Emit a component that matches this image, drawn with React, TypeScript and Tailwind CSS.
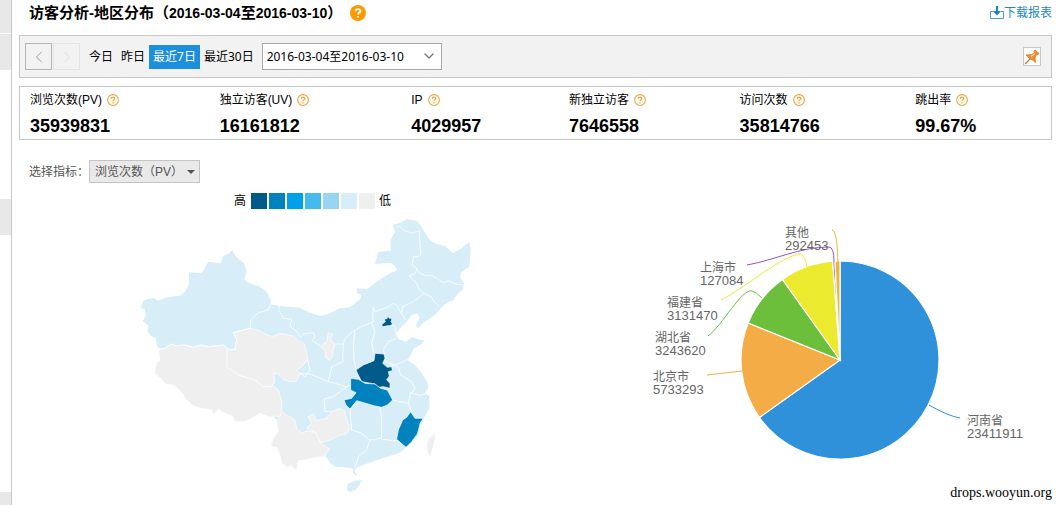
import type { ReactNode } from 'react';
import { clsx } from 'clsx';
import { ChevronDown, ChevronLeft, ChevronRight } from 'lucide-react';

const NO_DATA = '#efefef';
const LOW = '#d7edf8';

const stats = [
  { label: '浏览次数(PV)', value: '35939831' },
  { label: '独立访客(UV)', value: '16161812' },
  { label: 'IP', value: '4029957' },
  { label: '新独立访客', value: '7646558' },
  { label: '访问次数', value: '35814766' },
  { label: '跳出率', value: '99.67%' },
];

const ranges = ['今日', '昨日', '最近7日', '最近30日'];

const legend = ['bg-[#005b8a]', 'bg-[#0082bf]', 'bg-[#00a0ea]', 'bg-[#43bbef]', 'bg-[#99d5f3]', 'bg-[#d7edf8]', 'bg-[#efefef]'];

// Map outlines, drawn at three units per pixel
const mainland =
  '307,121 318,140 330,150 342,160 350,185 342,208 355,218 385,228 410,245 422,270 422,283 448,288 510,293 538,308 570,318 595,312 630,295 660,292 690,268 695,255 680,250 682,235 710,238 755,205 780,190 802,180 795,168 782,158 760,160 735,162 745,125 782,122 782,90 795,65 788,45 810,38 830,28 860,32 875,50 895,85 910,98 945,108 968,130 995,115 1018,95 1022,120 1018,170 995,185 990,200 1002,220 998,240 985,248 970,270 950,278 935,292 915,315 880,338 865,355 858,345 868,325 862,310 845,315 830,335 810,355 797,370 805,388 828,395 845,382 865,388 884,392 870,405 852,415 840,440 832,450 855,465 875,490 892,515 895,535 885,548 898,560 898,595 888,612 880,628 870,650 865,675 845,698 828,712 810,728 772,740 735,752 700,765 685,770 672,782 682,797 670,792 668,775 640,772 615,770 600,758 588,740 570,740 540,745 525,750 445,665 440,630 290,470 90,418 80,405 78,385 62,378 52,362 56,348 38,332 48,318 45,298 32,294 40,272 55,266 72,264 85,272 110,262 150,257 165,245 177,222 177,187 215,190 235,155 272,160 280,137 295,132';

const regions = [
  {
    name: '西藏',
    fill: NO_DATA,
    points:
      '85,418 105,415 122,402 140,408 165,405 190,412 215,405 235,410 280,405 292,420 290,470 325,495 375,510 400,530 430,528 445,540 455,575 455,605 450,620 435,618 420,622 390,610 345,635 315,635 308,620 290,612 265,598 250,615 245,600 215,595 190,588 165,565 160,552 130,525 105,522 95,508 73,488 80,460 90,450',
  },
  {
    name: '青海',
    fill: NO_DATA,
    points:
      '292,420 315,418 320,388 310,368 330,362 360,355 390,362 405,372 428,380 450,370 490,378 505,392 522,400 530,430 533,450 515,470 500,480 510,492 498,515 480,515 460,508 445,492 432,490 434,515 425,530 400,530 375,510 325,495 290,470',
  },
  {
    name: '宁夏',
    fill: NO_DATA,
    points: '595,368 607,372 602,388 615,405 608,425 610,435 600,452 585,440 588,425 572,410 590,395',
  },
  {
    name: '云南',
    fill: NO_DATA,
    points:
      '455,605 470,615 495,630 500,655 515,670 530,663 557,668 568,690 572,700 590,712 600,718 588,730 586,740 570,740 540,745 525,750 505,752 500,782 485,768 470,772 455,760 450,735 440,712 422,708 430,685 445,665 440,630 450,620',
  },
  {
    name: '贵州',
    fill: NO_DATA,
    points:
      '535,620 550,612 560,632 590,625 605,605 630,595 645,605 650,630 660,655 650,670 620,680 600,690 572,698 557,668 530,655 545,640',
  },
  {
    name: '河南',
    fill: '#005b8a',
    points:
      '735,430 762,432 765,445 758,460 772,472 785,470 787,482 775,485 778,498 770,510 780,520 780,535 760,530 745,532 735,522 695,515 685,495 678,480 700,465 732,452',
  },
  {
    name: '湖北',
    fill: '#0082bf',
    points:
      '662,505 685,508 705,520 735,522 752,535 772,540 780,555 788,570 772,585 755,592 735,588 725,585 680,572 670,585 660,597 648,585 642,570 665,565 678,548 662,540',
  },
  {
    name: '福建',
    fill: '#0082bf',
    points: '842,605 855,625 880,625 870,640 868,650 862,672 845,695 828,712 812,698 800,688 805,660 818,630 830,622',
  },
  {
    name: '北京',
    fill: '#005b8a',
    points: '772,317 778,325 786,325 783,335 789,343 778,347 772,347 765,349 756,350 756,343 766,335 763,328 772,325',
  },
  { name: '台湾', fill: NO_DATA, points: '905,678 915,668 915,690 908,715 902,742 893,728 890,700 897,685' },
  { name: '海南', fill: LOW, points: '650,830 655,820 672,812 697,808 690,825 675,842 660,847 650,842' },
];

const borders = [
  // 新疆 / 甘肃 / 内蒙古
  '85,418 105,415 122,402 140,408 165,405 190,412 215,405 235,410 280,405 300,420 315,418 320,388 310,368 360,355 362,330 385,308 415,300 422,283',
  '448,288 446,300 460,325 485,328 480,350 498,362 512,382 520,372 550,368 555,380 547,392 572,408',
  // 东北
  '800,50 810,48 820,60 845,70 868,62 872,135 862,140 852,138 845,165 860,175 858,188 838,198 860,220 865,235 882,250 850,275 818,290 815,312 800,285 790,280 772,292 735,305 730,292 728,318 730,335 695,350 672,362 645,385 640,402 615,402',
  '860,175 870,190 890,198 905,195 925,208 940,218 955,212 975,222 1000,225',
  '882,250 905,262 915,278 928,290',
  '815,312 828,330',
  '785,342 795,350 797,370',
  // 华北
  '725,340 735,365 725,400 732,430',
  '675,362 670,400 672,450 678,480',
  '800,385 775,395 760,420 765,435',
  '640,402 638,455 605,470 595,515 650,530 662,525',
  '510,490 540,492 560,500 595,515',
  '533,450 540,480 525,500 510,490',
  // 长江流域
  '650,530 610,560 582,568 585,605 605,605',
  '678,575 660,600 665,660 695,670 720,690 755,685 755,625 750,592',
  '755,688 775,690 800,692 812,700',
  '788,570 810,575 835,580 845,605',
  '780,465 805,470 812,495 845,515 855,535 840,555 835,580',
  '762,452 795,465 815,458 840,445',
  '840,548 870,556 890,550',
  // 华南
  '720,690 710,720 685,740 675,775',
];

const PIE = { cx: 840, cy: 360, r: 99 };

const slices = [
  { name: '河南省', value: 23411911, color: '#2f91da', x: 967, y: 425, line: 'M929 405 Q948 416 960 418' },
  { name: '北京市', value: 5733293, color: '#f4ad46', x: 653, y: 381, line: 'M707 375 Q725 373 742 371' },
  { name: '湖北省', value: 3243620, color: '#6bbf3b', x: 655, y: 342, line: 'M708 336 C722 326 742 288 752 291 Q756 292 762 298' },
  { name: '福建省', value: 3131470, color: '#ecea2e', x: 667, y: 307, line: 'M721 300 C745 288 784 254 801 254 Q805 256 807 267' },
  { name: '上海市', value: 127084, color: '#9b50cc', x: 700, y: 272, line: 'M747 265 C775 260 800 247 829 247 Q834 247 834 262' },
  { name: '其他', value: 292453, color: '#edb72f', x: 785, y: 237, line: 'M832 230 Q837 230 838 262' },
];

function slicePath(start: number, end: number) {
  const { cx, cy, r } = PIE;
  const point = (t: number) => {
    const angle = t * 2 * Math.PI - Math.PI / 2;
    return `${cx + r * Math.cos(angle)} ${cy + r * Math.sin(angle)}`;
  };
  return `M${cx} ${cy}L${point(start)}A${r} ${r} 0 ${end - start > 0.5 ? 1 : 0} 1 ${point(end)}Z`;
}

function HelpIcon({ solid = false }: { solid?: boolean }) {
  const size = solid ? 16 : 12;
  return (
    <svg width={size} height={size} viewBox="0 0 16 16" fill="none" className="shrink-0">
      <circle cx="8" cy="8" r={solid ? 8 : 7.2} fill={solid ? '#f90' : '#fffaf0'} stroke={solid ? 'none' : '#e8a545'} strokeWidth="1.4" />
      <path
        d="M5.6 6.2C5.6 3.4 10.4 3.4 10.4 6.2C10.4 7.8 8 7.8 8 9.6M8 11V12.6"
        stroke={solid ? '#fff' : '#eda13a'}
        strokeWidth={solid ? 1.9 : 1.5}
      />
    </svg>
  );
}

function DownloadIcon() {
  return (
    <svg width="14" height="14" viewBox="0 0 14 14" fill="none">
      <path d="M3 5.5H0.5V12.5H13.5V5.5H11" stroke="#4d9fd0" />
      <path d="M6 0H8V5H11L7 9.5L3 5H6Z" fill="#1583c6" />
    </svg>
  );
}

function PinIcon() {
  return (
    <svg width="16" height="16" viewBox="0 0 16 16">
      <path d="M1 15L6 10" stroke="#c07a45" strokeWidth="1.3" />
      <path d="M11 1L15 4.5L13.5 6L12.5 5.8L11 9L11.5 13.5L8.5 11L5.5 9.5L2 6L7.5 5.5L10.5 3.5L10 2Z" fill="#f58a2c" stroke="#c9681f" strokeWidth=".6" />
      <path d="M11 4.5L7 7.5" stroke="#ffd3a0" strokeWidth="1.3" />
    </svg>
  );
}

function ChinaMap() {
  return (
    <svg width="350" height="295" viewBox="0 0 1050 885" className="shrink-0" strokeLinejoin="round">
      <polygon points={mainland} fill={LOW} />
      {regions.map((region) => (
        <polygon key={region.name} points={region.points} fill={region.fill} stroke="#fff" strokeWidth="2" />
      ))}
      {borders.map((points) => (
        <polyline key={points} points={points} fill="none" stroke="#fff" strokeWidth="3" strokeOpacity=".8" />
      ))}
    </svg>
  );
}

function RegionPie() {
  const total = slices.reduce((sum, slice) => sum + slice.value, 0);
  let offset = 0;

  return (
    <svg width="400" height="260" viewBox="640 215 400 260" className="shrink-0">
      {slices.map((slice) => {
        const start = offset / total;
        offset += slice.value;
        return (
          <path key={slice.name} d={slicePath(start, offset / total)} fill={slice.color} stroke="#fff" strokeWidth="1.2" />
        );
      })}
      {slices.map((slice) => (
        <g key={slice.name}>
          <path d={slice.line} fill="none" stroke={slice.color} />
          <text fill="#666">
            <tspan x={slice.x} y={slice.y}>{slice.name}</tspan>
            <tspan x={slice.x} y={slice.y + 13} className="text-[13px]">{slice.value}</tspan>
          </text>
        </g>
      ))}
    </svg>
  );
}

function StepButton({ label, disabled, children }: { label: string; disabled?: boolean; children: ReactNode }) {
  return (
    <button
      type="button"
      aria-label={label}
      disabled={disabled}
      className={clsx(
        'flex h-[27px] w-[27px] items-center justify-center border',
        disabled ? 'border-[#e4e4e4] text-[#dcdcdc]' : 'border-[#b4b4b4] text-[#8c8c8c]',
      )}
    >
      {children}
    </button>
  );
}

export default function App() {
  return (
    <div className="relative flex min-h-screen bg-white font-['Liberation_Sans','Noto_Sans_CJK_SC',sans-serif] text-xs text-black">
      <aside className="flex w-3 shrink-0 flex-col border-r border-[#c8c8c8]">
        <div className="h-[33px] bg-[#e8e8e8]" />
        <div className="mt-px h-9 bg-[#e8e8e8]" />
        <div className="mt-[129px] h-9 bg-[#e8e8e8]" />
        <div className="mt-auto h-[13px] bg-[#e8e8e8]" />
      </aside>

      <main className="min-w-0 flex-1 pr-1 pl-[7px]">
        <header className="flex h-[35px] items-start justify-between pl-[10px]">
          <div className="flex h-[26px] items-center gap-2">
            <h1 className="text-[15px] font-bold">
              访客分析-地区分布（<span className="text-sm">2016-03-04</span>至<span className="text-sm">2016-03-10</span>）
            </h1>
            <HelpIcon solid />
          </div>
          <a href="#download" className="flex h-[26px] items-center text-[#1f86c9]">
            <DownloadIcon />
            下载报表
          </a>
        </header>

        <section className="flex h-[43px] items-center border border-[#c8c8c8] bg-[#f2f2f2] pr-[10px] pl-[5px] font-['Noto_Sans','Noto_Sans_CJK_SC',sans-serif]">
          <div className="flex gap-px">
            <StepButton label="上一周期">
              <ChevronLeft size={20} strokeWidth={1} />
            </StepButton>
            <StepButton label="下一周期" disabled>
              <ChevronRight size={20} strokeWidth={1} />
            </StepButton>
          </div>
          <div className="ml-[5px] flex">
            {ranges.map((range) => (
              <button
                key={range}
                type="button"
                className={clsx('h-6 px-1', range === '最近7日' && 'bg-[#1b8fdc] text-white')}
              >
                {range}
              </button>
            ))}
          </div>
          <div className="relative ml-1">
            <select aria-label="日期范围" className="h-[27px] w-[180px] appearance-none border border-[#a9a9a9] bg-white pl-1">
              <option>2016-03-04至2016-03-10</option>
            </select>
            <ChevronDown size={16} strokeWidth={2} className="pointer-events-none absolute top-[5px] right-[5px] text-[#777]" />
          </div>
          <button type="button" aria-label="固定" className="ml-auto flex h-[19px] w-[18px] items-center justify-center border border-[#c8c8c8] bg-white">
            <PinIcon />
          </button>
        </section>

        <dl className="mt-2 grid h-[54px] grid-cols-[190fr_192fr_158fr_171fr_176fr_136fr] border border-[#c8c8c8] pl-[10px]">
          {stats.map((stat) => (
            <div key={stat.label} className="pt-1">
              <dt className="flex h-[18px] items-center gap-[5px]">
                {stat.label}
                <HelpIcon />
              </dt>
              <dd className="mt-1 text-lg leading-[26px] font-bold">{stat.value}</dd>
            </div>
          ))}
        </dl>

        <div className="mt-5 flex items-center pl-[10px] text-[#555]">
          <label htmlFor="metric">选择指标：</label>
          <div className="relative">
            <select id="metric" className="h-[23px] w-[111px] appearance-none border border-[#c4c4c4] bg-[#e9e9e9] pl-[5px]">
              <option>浏览次数（PV）</option>
            </select>
            <svg width="8" height="4" viewBox="0 0 8 4" className="pointer-events-none absolute top-[10px] right-[5px]">
              <path d="M0 0H8L4 4Z" fill="#555" />
            </svg>
          </div>
        </div>

        <div className="mt-[9px] flex h-[18px] items-center gap-0.5 pl-[215px]">
          <span className="mr-[3px]">高</span>
          {legend.map((color) => (
            <span key={color} className={clsx('h-4 w-4', color)} />
          ))}
          <span className="ml-0.5">低</span>
        </div>

        <div className="flex items-start justify-between pr-3 pl-[111px]">
          <ChinaMap />
          <div className="pt-[5px]">
            <RegionPie />
          </div>
        </div>
      </main>

      <p className="absolute right-1 bottom-0.5 font-['Liberation_Serif',serif] text-sm">drops.wooyun.org</p>
    </div>
  );
}
